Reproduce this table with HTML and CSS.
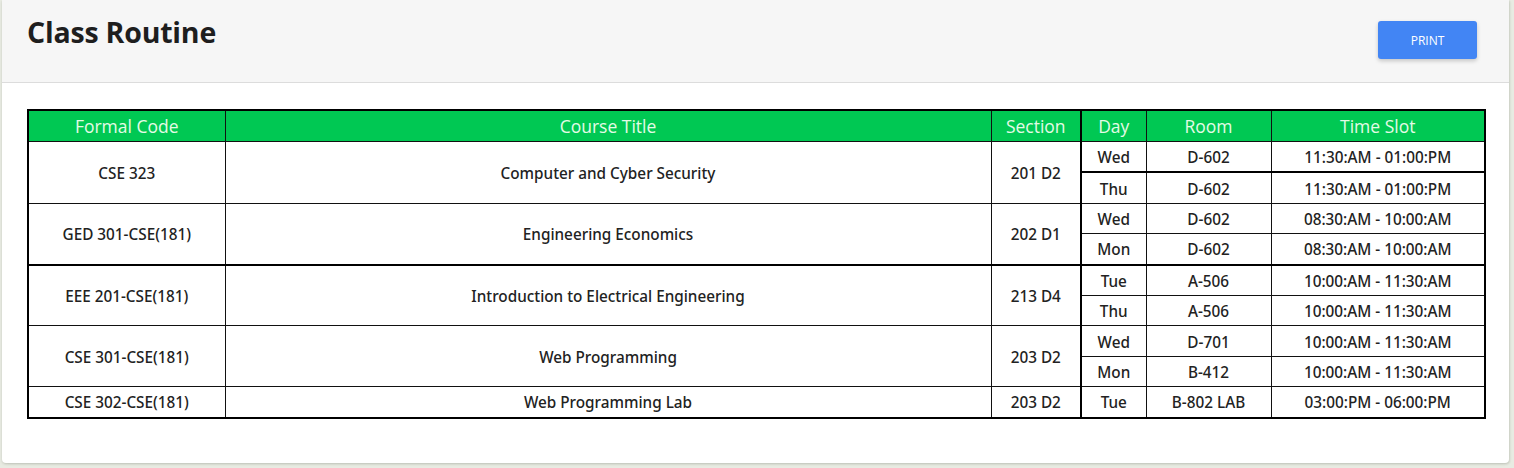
FILE: index.html
```html
<!DOCTYPE html>
<html>
<head>
<meta charset="utf-8">
<link rel="stylesheet" href="styles.css">
</head>
<body>
<div class="card">
  <div class="card-header">
    <h1 class="title">Class Routine</h1>
    <button class="print-btn">PRINT</button>
  </div>
  <div class="card-body">
    <table class="routine">
      <colgroup>
        <col class="c-code"><col class="c-title"><col class="c-sec"><col class="c-day"><col class="c-room"><col class="c-time">
      </colgroup>
      <thead>
        <tr><th>Formal Code</th><th>Course Title</th><th>Section</th><th class="sep">Day</th><th>Room</th><th>Time Slot</th></tr>
      </thead>
      <tbody>
        <tr><td rowspan="2">CSE 323</td><td rowspan="2">Computer and Cyber Security</td><td rowspan="2">201 D2</td><td class="sep">Wed</td><td>D-602</td><td>11:30:AM - 01:00:PM</td></tr>
        <tr class="thick-top"><td class="sep">Thu</td><td>D-602</td><td>11:30:AM - 01:00:PM</td></tr>
        <tr><td rowspan="2">GED 301-CSE(181)</td><td rowspan="2">Engineering Economics</td><td rowspan="2">202 D1</td><td class="sep">Wed</td><td>D-602</td><td>08:30:AM - 10:00:AM</td></tr>
        <tr><td class="sep">Mon</td><td>D-602</td><td>08:30:AM - 10:00:AM</td></tr>
        <tr class="thick-top"><td rowspan="2">EEE 201-CSE(181)</td><td rowspan="2">Introduction to Electrical Engineering</td><td rowspan="2">213 D4</td><td class="sep">Tue</td><td>A-506</td><td>10:00:AM - 11:30:AM</td></tr>
        <tr><td class="sep">Thu</td><td>A-506</td><td>10:00:AM - 11:30:AM</td></tr>
        <tr><td rowspan="2">CSE 301-CSE(181)</td><td rowspan="2">Web Programming</td><td rowspan="2">203 D2</td><td class="sep">Wed</td><td>D-701</td><td>10:00:AM - 11:30:AM</td></tr>
        <tr><td class="sep">Mon</td><td>B-412</td><td>10:00:AM - 11:30:AM</td></tr>
        <tr><td>CSE 302-CSE(181)</td><td>Web Programming Lab</td><td>203 D2</td><td class="sep">Tue</td><td>B-802 LAB</td><td>03:00:PM - 06:00:PM</td></tr>
      </tbody>
    </table>
  </div>
</div>
</body>
</html>
```

FILE: styles.css
```css
html, body {
  margin: 0;
  padding: 0;
}
body {
  background: #e8ebe2;
  font-family: "Open Sans", "Noto Sans", "Liberation Sans", sans-serif;
  color: #212529;
  padding: 0 5px 6px 2px;
}
.card {
  background: #ffffff;
  border-radius: 0 0 4px 4px;
  box-shadow: 0 1px 3px rgba(0, 0, 0, 0.12), 1px 1px 2px rgba(120, 130, 100, 0.15);
  overflow: hidden;
}
.card-header {
  background: #f6f6f6;
  border-bottom: 1px solid #dcdcdc;
  height: 82px;
  display: flex;
  justify-content: space-between;
  align-items: flex-start;
  padding: 0 32px 0 25px;
}
.title {
  margin: 13px 0 0 0;
  font-size: 28.5px;
  font-weight: 700;
  color: #1e1e1e;
  letter-spacing: -0.2px;
}
.print-btn {
  margin-top: 21px;
  width: 99px;
  height: 38px;
  background: #4285f4;
  color: #ffffff;
  border: none;
  border-radius: 3px;
  font-family: "Open Sans", "Noto Sans", sans-serif;
  font-size: 12px;
  box-shadow: 0 2px 4px rgba(0, 0, 0, 0.2);
}
.card-body {
  padding: 26px 26px 44px 25px;
}
.routine {
  width: 100%;
  border-collapse: collapse;
  border: 2px solid #000;
  table-layout: fixed;
  font-size: 15.3px;
}
.c-code { width: 197px; }
.c-title { width: 766px; }
.c-sec { width: 90px; }
.c-day { width: 65px; }
.c-room { width: 125px; }
.c-time { width: 214px; }
.routine th {
  background: #00c853;
  color: #e4fbe6;
  font-weight: 400;
  font-size: 17.5px;
  height: 30px;
  padding: 0;
  border: 1px solid #111;
  text-align: center;
}
.routine td {
  border: 1px solid #111;
  height: 28.4px;
  padding: 1px 0 0 0;
  line-height: 18px;
  text-align: center;
  font-family: "Noto Sans", "Open Sans", sans-serif;
  font-weight: 500;
  color: #222;
}
.routine .sep {
  border-left: 2px solid #000;
}
.routine tr.thick-top td {
  border-top: 2px solid #000;
}
```
